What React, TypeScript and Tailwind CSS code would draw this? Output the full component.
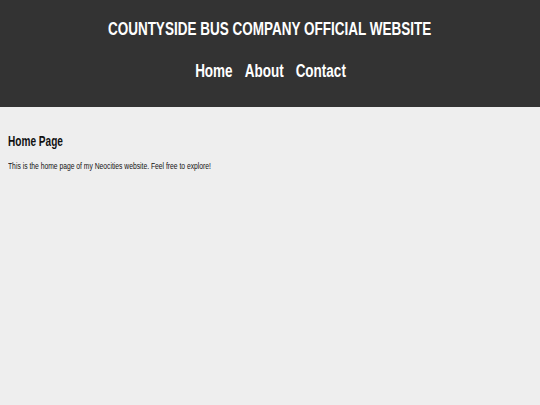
export default function App() {
  return (
    <div className="min-h-[405px] bg-[#eeeeee] font-['Liberation_Sans',Arial,sans-serif]">
      <header className="flex h-[107px] flex-col items-center bg-[#333333] pt-[17px] text-white">
        <h1 className="scale-x-75 text-[18px] font-bold leading-[24px]">COUNTYSIDE BUS COMPANY OFFICIAL WEBSITE</h1>
        <nav className="mt-[18px] flex scale-x-75 gap-[16px] text-[18px] font-bold leading-[24px]">
          <a href="#">Home</a>
          <a href="#">About</a>
          <a href="#">Contact</a>
        </nav>
      </header>
      <main className="px-[8px] pt-[25px] text-[#111111]">
        <h2 className="origin-left scale-x-[0.72] text-[14px] font-bold leading-[18px]">Home Page</h2>
        <p className="mt-[11px] origin-left scale-x-75 text-[9px] leading-[11px]">
          This is the home page of my Neocities website. Feel free to explore!
        </p>
      </main>
    </div>
  );
}
